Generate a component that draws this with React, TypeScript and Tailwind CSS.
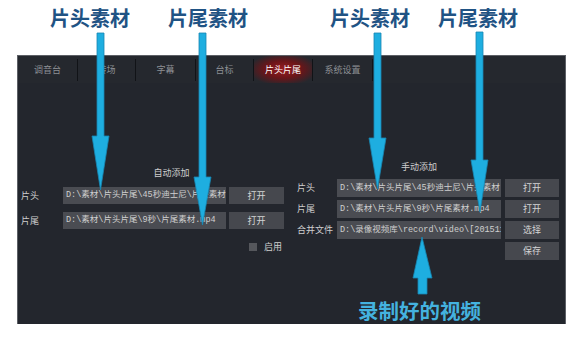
import React from "react";

const tabs = [
  { label: "调音台", w: "w-[60px]" },
  { label: "转场", w: "w-[58px]" },
  { label: "字幕", w: "w-[60px]" },
  { label: "台标", w: "w-[58px]" },
  { label: "片头片尾", w: "w-[59px]", active: true },
  { label: "系统设置", w: "w-[60px]" },
];

const ui = { fontFamily: '"Noto Sans CJK SC", "Noto Sans", sans-serif' };
const mono = { fontFamily: '"Liberation Mono", "Noto Sans CJK SC", monospace' };

const Field = ({ value }: { value: string }) => (
  <div
    className="h-full flex-1 min-w-0 bg-[#4a4c52] text-[#cfcfcf] text-[8.5px] leading-none flex items-center pl-[3px] overflow-hidden whitespace-nowrap"
    style={mono}
  >
    {value}
  </div>
);

const Btn = ({ label }: { label: string }) => (
  <div className="h-full bg-[#46484e] text-[#d4d4d4] text-[9px] flex items-center justify-center">
    {label}
  </div>
);

const App = () => {
  return (
    <div className="relative w-[586px] h-[340px] bg-white pt-[55px] pl-[17px]" style={ui}>
      {/* Panel */}
      <div className="w-[549px] h-[269px] bg-[#23262d] border-l border-t border-r border-[#5d6066] flex flex-col">
        {/* Tabs */}
        <div className="h-[27px] flex bg-[#25282e]">
          {tabs.map((t) => (
            <div key={t.label} className={`${t.w} flex items-center`}>
              <div
                className={`flex-1 h-full flex items-center justify-center text-[9px] ${
                  t.active
                    ? "text-white bg-[radial-gradient(ellipse_at_center,#9a1c1f_0%,#6a1519_45%,#25282e_85%)]"
                    : "text-[#8d9095]"
                }`}
              >
                {t.label}
              </div>
              <div className="w-px h-[22px] bg-[#111317]" />
            </div>
          ))}
        </div>

        {/* Content */}
        <div className="flex flex-1">
          {/* Auto add */}
          <div className="w-[266px] pl-[3px] pt-[85px] flex flex-col">
            <div className="text-[9px] leading-[10px] text-[#cfcfcf] text-center pl-[42px] pr-[4px]">
              自动添加
            </div>
            <div className="mt-[9px] flex flex-col gap-[8px]">
              {[
                ["片头", "D:\\素材\\片头片尾\\45秒迪士尼\\片头素材"],
                ["片尾", "D:\\素材\\片头片尾\\9秒\\片尾素材.mp4"],
              ].map(([l, v]) => (
                <div key={l} className="h-[17px] flex items-center">
                  <div className="w-[42px] text-[9px] text-[#cfcfcf]">{l}</div>
                  <Field value={v} />
                  <div className="w-[55px] ml-[3px] h-full">
                    <Btn label="打开" />
                  </div>
                </div>
              ))}
            </div>
            <div className="mt-[11px] flex items-center justify-end gap-[7px] pr-[2px]">
              <div className="w-[8px] h-[8px] bg-[#55575c]" />
              <div className="text-[9px] text-[#cfcfcf]">启用</div>
            </div>
          </div>

          {/* Manual add */}
          <div className="ml-[13px] w-[262px] pt-[79px] flex flex-col">
            <div className="text-[9px] leading-[10px] text-[#cfcfcf] text-center pl-[40px] pr-[58px]">
              手动添加
            </div>
            <div className="mt-[7px] flex flex-col gap-[3px]">
              {[
                ["片头", "D:\\素材\\片头片尾\\45秒迪士尼\\片头素材", "打开"],
                ["片尾", "D:\\素材\\片头片尾\\9秒\\片尾素材.mp4", "打开"],
                ["合并文件", "D:\\录像视频库\\record\\video\\[20151101-1430]", "选择"],
              ].map(([l, v, b]) => (
                <div key={l} className="h-[18px] flex items-center">
                  <div className="w-[40px] text-[9px] text-[#cfcfcf]">{l}</div>
                  <Field value={v} />
                  <div className="w-[54px] ml-[4px] h-full">
                    <Btn label={b} />
                  </div>
                </div>
              ))}
              <div className="h-[18px] flex justify-end">
                <div className="w-[54px] h-full">
                  <Btn label="保存" />
                </div>
              </div>
            </div>
          </div>
        </div>
      </div>

      {/* Annotations */}
      <svg className="absolute inset-0 pointer-events-none" width="586" height="340" viewBox="0 0 586 340">
        <g fill="#1eaee0" stroke="#1786b3" strokeWidth="0.8">
          <polygon points="97,33 104,33 104,136 109,136 100.5,190 92,136 97,136" />
          <polygon points="199,33 206,33 206,177 211,177 202.5,225 194,177 199,177" />
          <polygon points="374,33 381,33 381,138 386,138 377.5,189 369,138 374,138" />
          <polygon points="476,32 483,32 483,160 488,160 480,212 471,160 476,160" />
          <polygon points="422,237 432,278 427,278 427,294 418,294 418,278 413,278" />
        </g>
      </svg>
      <div className="absolute left-[50px] top-[5px] text-[20px] font-bold leading-[26px] text-[#1f5384]">片头素材</div>
      <div className="absolute left-[168px] top-[5px] text-[20px] font-bold leading-[26px] text-[#1f5384]">片尾素材</div>
      <div className="absolute left-[330px] top-[5px] text-[20px] font-bold leading-[26px] text-[#1f5384]">片头素材</div>
      <div className="absolute left-[438px] top-[5px] text-[20px] font-bold leading-[26px] text-[#1f5384]">片尾素材</div>
      <div className="absolute left-[358px] top-[297px] text-[20.5px] font-bold leading-[26px] text-[#44b2df]">录制好的视频</div>
    </div>
  );
};

export default App;
